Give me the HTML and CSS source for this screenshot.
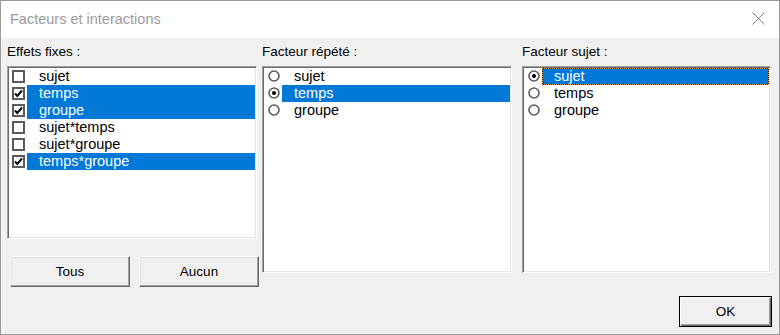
FILE: index.html
```html
<!DOCTYPE html>
<html lang="fr">
<head>
    <meta charset="UTF-8">
    <title>Facteurs et interactions</title>
    <link rel="stylesheet" href="styles.css">
</head>
<body>
    <div class="dialog">
        <div class="titlebar">
            <span class="title">Facteurs et interactions</span>
            <svg class="close" width="13" height="13" viewBox="0 0 13 13">
                <path d="M0.5 0.5 L12.5 12.5 M12.5 0.5 L0.5 12.5" stroke="#808080" stroke-width="1" fill="none"/>
            </svg>
        </div>
        <div class="content">
            <div class="columns">
                <div class="col col-fixed">
                    <div class="label">Effets fixes :</div>
                    <ul class="list list-short">
                        <li class="item"><span class="check"></span><span class="text">sujet</span></li>
                        <li class="item selected"><span class="check"><svg width="9" height="9" viewBox="0 0 9 9"><path d="M1 4.5 L3.3 7 L8 1.5" stroke="#000" stroke-width="2" fill="none"/></svg></span><span class="text">temps</span></li>
                        <li class="item selected"><span class="check"><svg width="9" height="9" viewBox="0 0 9 9"><path d="M1 4.5 L3.3 7 L8 1.5" stroke="#000" stroke-width="2" fill="none"/></svg></span><span class="text">groupe</span></li>
                        <li class="item"><span class="check"></span><span class="text">sujet*temps</span></li>
                        <li class="item"><span class="check"></span><span class="text">sujet*groupe</span></li>
                        <li class="item selected"><span class="check"><svg width="9" height="9" viewBox="0 0 9 9"><path d="M1 4.5 L3.3 7 L8 1.5" stroke="#000" stroke-width="2" fill="none"/></svg></span><span class="text">temps*groupe</span></li>
                    </ul>
                    <div class="actions">
                        <button class="btn">Tous</button>
                        <button class="btn">Aucun</button>
                    </div>
                </div>
                <div class="col col-repeat">
                    <div class="label">Facteur répété :</div>
                    <ul class="list list-tall">
                        <li class="item"><svg class="radio" width="12" height="12" viewBox="0 0 12 12"><circle cx="6" cy="6" r="5" stroke="#5a5a5a" stroke-width="1.6" fill="#fff"/></svg><span class="text">sujet</span></li>
                        <li class="item selected"><svg class="radio" width="12" height="12" viewBox="0 0 12 12"><circle cx="6" cy="6" r="5" stroke="#5a5a5a" stroke-width="1.6" fill="#fff"/><circle cx="6" cy="6" r="2" fill="#000"/></svg><span class="text">temps</span></li>
                        <li class="item"><svg class="radio" width="12" height="12" viewBox="0 0 12 12"><circle cx="6" cy="6" r="5" stroke="#5a5a5a" stroke-width="1.6" fill="#fff"/></svg><span class="text">groupe</span></li>
                    </ul>
                </div>
                <div class="col col-subject">
                    <div class="label">Facteur sujet :</div>
                    <ul class="list list-tall">
                        <li class="item selected focused"><svg class="radio" width="12" height="12" viewBox="0 0 12 12"><circle cx="6" cy="6" r="5" stroke="#5a5a5a" stroke-width="1.6" fill="#fff"/><circle cx="6" cy="6" r="2" fill="#000"/></svg><span class="text">sujet</span></li>
                        <li class="item"><svg class="radio" width="12" height="12" viewBox="0 0 12 12"><circle cx="6" cy="6" r="5" stroke="#5a5a5a" stroke-width="1.6" fill="#fff"/></svg><span class="text">temps</span></li>
                        <li class="item"><svg class="radio" width="12" height="12" viewBox="0 0 12 12"><circle cx="6" cy="6" r="5" stroke="#5a5a5a" stroke-width="1.6" fill="#fff"/></svg><span class="text">groupe</span></li>
                    </ul>
                </div>
            </div>
            <div class="footer">
                <button class="btn btn-default">OK</button>
            </div>
        </div>
    </div>
</body>
</html>
```

FILE: styles.css
```css
body {
    margin: 0;
    background-color: #f0f0f0;
    font-family: "Liberation Sans", Arial, sans-serif;
}
.dialog {
    width: 780px;
    height: 335px;
    box-sizing: border-box;
    border: 1px solid #9a9a9a;
    background-color: #f0f0f0;
    overflow: hidden;
}
.titlebar {
    height: 37px;
    background-color: #fff;
    display: flex;
    justify-content: space-between;
    padding: 0 14px 0 9px;
}
.title {
    font-size: 14.5px;
    line-height: 37px;
    color: #9a9a9a;
}
.close {
    margin-top: 11px;
}
.content {
    padding: 6px 7px 0 6px;
}
.columns {
    display: flex;
    align-items: flex-start;
}
.col-fixed {
    width: 250px;
}
.col-repeat {
    width: 250px;
    margin-left: 5px;
}
.col-subject {
    width: 249px;
    margin-left: 10px;
}
.label {
    font-size: 13.5px;
    line-height: 16px;
    color: #000;
    margin-bottom: 6px;
}
.list {
    margin: 0;
    padding: 1px;
    list-style: none;
    box-sizing: border-box;
    background-color: #fff;
    border-top: 1px solid #a0a0a0;
    border-left: 1px solid #a0a0a0;
    border-right: 1px solid #fff;
    border-bottom: 1px solid #fff;
    box-shadow: inset 1px 1px 0 #696969, inset -1px -1px 0 #e3e3e3;
}
.list-short {
    height: 173px;
}
.list-tall {
    height: 207px;
}
.item {
    display: flex;
    height: 17px;
    font-size: 14.5px;
    line-height: 17px;
    color: #000;
}
.check {
    width: 13px;
    height: 13px;
    box-sizing: border-box;
    border: 2px solid #5a5a5a;
    background-color: #fff;
    margin: 2px 2px 0 3px;
    display: flex;
    align-items: center;
    justify-content: center;
}
.radio {
    margin: 2px 2px 0 4px;
    flex-shrink: 0;
}
.text {
    flex: 1;
    padding-left: 12px;
    white-space: nowrap;
}
.selected .text {
    background-color: #0078d7;
    color: #fff;
}
.focused .text {
    box-sizing: border-box;
    padding-left: 11px;
    border: 1px solid #000;
    line-height: 15px;
    outline: 1px dotted #f0a030;
    outline-offset: -1px;
}
.actions {
    display: flex;
    gap: 9px;
    padding-left: 3px;
    margin-top: 17px;
}
.btn {
    width: 120px;
    height: 31px;
    padding: 0;
    flex-shrink: 0;
    background-color: #f0f0f0;
    border-top: 1px solid #fff;
    border-left: 1px solid #fff;
    border-right: 1px solid #696969;
    border-bottom: 1px solid #696969;
    box-shadow: inset -1px -1px 0 #a0a0a0, inset 1px 1px 0 #e3e3e3;
    font-family: "Liberation Sans", Arial, sans-serif;
    font-size: 13.5px;
    color: #000;
}
.footer {
    display: flex;
    justify-content: flex-end;
    margin-top: 9px;
}
.btn-default {
    width: 93px;
    border: 1px solid #000;
    box-shadow: inset 1px 1px 0 #fff, inset -1px -1px 0 #696969, inset -2px -2px 0 #a0a0a0;
}
```
